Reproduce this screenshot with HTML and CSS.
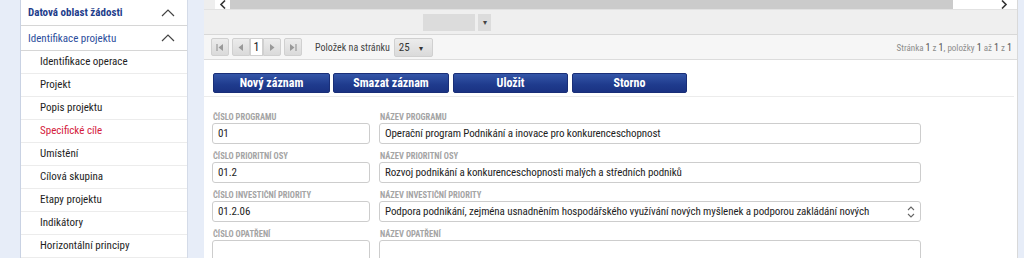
FILE: index.html
```html
<!DOCTYPE html>
<html lang="cs">
<head>
    <meta charset="UTF-8">
    <title>Identifikace projektu</title>
    <link rel="stylesheet" href="styles.css">
</head>
<body>
<div class="page">

    <aside class="sidebar">
        <div class="side-head">
            <span>Datová oblast žádosti</span>
            <svg class="chev" width="14" height="8" viewBox="0 0 14 8"><path d="M1 7 L7 1 L13 7" fill="none" stroke="#444" stroke-width="1.2"/></svg>
        </div>
        <div class="side-group">
            <span>Identifikace projektu</span>
            <svg class="chev" width="14" height="8" viewBox="0 0 14 8"><path d="M1 7 L7 1 L13 7" fill="none" stroke="#444" stroke-width="1.2"/></svg>
        </div>
        <ul class="side-list">
            <li>Identifikace operace</li>
            <li>Projekt</li>
            <li>Popis projektu</li>
            <li class="active">Specifické cíle</li>
            <li>Umístění</li>
            <li>Cílová skupina</li>
            <li>Etapy projektu</li>
            <li>Indikátory</li>
            <li>Horizontální principy</li>
        </ul>
    </aside>

    <main class="panel">
        <div class="hscroll">
            <div class="hs-btn left"><svg width="8" height="9" viewBox="0 0 8 9"><path d="M6 0.5 L2 4.5 L6 8.5" fill="none" stroke="#333" stroke-width="1.6"/></svg></div>
            <div class="hs-track"></div>
            <div class="hs-btn right"><svg width="8" height="9" viewBox="0 0 8 9"><path d="M2 0.5 L6 4.5 L2 8.5" fill="none" stroke="#333" stroke-width="1.6"/></svg></div>
        </div>

        <div class="filter-row">
            <div class="filter-box"></div>
            <div class="filter-arrow">&#9662;</div>
        </div>

        <div class="pager">
            <div class="pg-btns">
                <span class="pg-btn"><svg width="8" height="7" viewBox="0 0 8 7"><path d="M1 0 V7" stroke="#999" stroke-width="1.2"/><path d="M7 0 L2.5 3.5 L7 7 Z" fill="#999"/></svg></span>
                <span class="pg-btn"><svg width="6" height="7" viewBox="0 0 6 7"><path d="M5 0 L0.5 3.5 L5 7 Z" fill="#999"/></svg></span>
                <span class="pg-num">1</span>
                <span class="pg-btn"><svg width="6" height="7" viewBox="0 0 6 7"><path d="M1 0 L5.5 3.5 L1 7 Z" fill="#999"/></svg></span>
                <span class="pg-btn"><svg width="8" height="7" viewBox="0 0 8 7"><path d="M1 0 L5.5 3.5 L1 7 Z" fill="#999"/><path d="M7 0 V7" stroke="#999" stroke-width="1.2"/></svg></span>
            </div>
            <span class="pg-label">Položek na stránku</span>
            <span class="pg-size">25 <i>&#9662;</i></span>
            <span class="pg-info">Stránka <b>1</b> z <b>1</b>, položky <b>1</b> až <b>1</b> z <b>1</b></span>
        </div>

        <div class="actions">
            <button class="btn">Nový záznam</button>
            <button class="btn">Smazat záznam</button>
            <button class="btn">Uložit</button>
            <button class="btn">Storno</button>
        </div>

        <div class="form">
            <div class="field short">
                <label>Číslo programu</label>
                <div class="input">01</div>
            </div>
            <div class="field long">
                <label>Název programu</label>
                <div class="input">Operační program Podnikání a inovace pro konkurenceschopnost</div>
            </div>

            <div class="field short">
                <label>Číslo prioritní osy</label>
                <div class="input">01.2</div>
            </div>
            <div class="field long">
                <label>Název prioritní osy</label>
                <div class="input">Rozvoj podnikání a konkurenceschopnosti malých a středních podniků</div>
            </div>

            <div class="field short">
                <label>Číslo investiční priority</label>
                <div class="input">01.2.06</div>
            </div>
            <div class="field long">
                <label>Název investiční priority</label>
                <div class="input spin">Podpora podnikání, zejména usnadněním hospodářského využívání nových myšlenek a podporou zakládání nových
                    <svg class="spinner" width="8" height="14" viewBox="0 0 8 14"><path d="M1 5 L4 2 L7 5 M1 9 L4 12 L7 9" fill="none" stroke="#666" stroke-width="1.1"/></svg>
                </div>
            </div>

            <div class="field short">
                <label>Číslo opatření</label>
                <div class="input"></div>
            </div>
            <div class="field long">
                <label>Název opatření</label>
                <div class="input"></div>
            </div>
        </div>
    </main>

</div>
</body>
</html>
```

FILE: styles.css
```css
:root {
    --bg-blue: #e7edf8;
    --nav-blue: #1f3e8c;
    --red: #d4203c;
    --font: "Roboto", sans-serif;
}

body {
    margin: 0;
    width: 1024px;
    height: 258px;
    overflow: hidden;
    background: var(--bg-blue);
    font-family: var(--font);
    font-stretch: 75%;
    color: #222;
}

.page {
    display: flex;
    align-items: flex-start;
    padding-left: 20px;
    gap: 16px;
}

/* --- Sidebar --- */
.sidebar {
    width: 166px;
    background: #fff;
    border-left: 1px solid #c9d2e3;
    border-right: 1px solid #d4dbe8;
    font-size: 11px;
}

.side-head,
.side-group {
    display: flex;
    justify-content: space-between;
    align-items: center;
    height: 24px;
    padding: 0 12px 0 7px;
    border-bottom: 1px solid #d6d6d6;
    color: var(--nav-blue);
}

.side-head {
    height: 25px;
    font-weight: bold;
}

.side-group {
    color: #2b4d9c;
}

.chev {
    display: block;
}

.side-list {
    list-style: none;
    margin: 0;
    padding: 0;
}

.side-list li {
    height: 22px;
    line-height: 22px;
    padding-left: 19px;
    border-bottom: 1px solid #ececec;
    color: #1e1e1e;
}

.side-list li.active {
    color: var(--red);
}

/* --- Main panel --- */
.panel {
    width: 813px;
    height: 258px;
    background: #fff;
    border-right: 1px solid #d9d9d9;
}

.hscroll {
    display: flex;
    height: 9px;
    background: #eee;
    padding-left: 11px;
    border-bottom: 1px solid #e2e2e2;
}

.hs-btn {
    display: flex;
    align-items: center;
    background: #fff;
}

.hs-btn svg {
    display: block;
}

.hs-btn.left {
    width: 15px;
    justify-content: center;
}

.hs-btn.right {
    width: 64px;
    justify-content: flex-end;
    padding-right: 9px;
    box-sizing: border-box;
}

.hs-track {
    flex: 1;
    background: #cbcbcb;
}

.filter-row {
    display: flex;
    align-items: center;
    gap: 3px;
    height: 24px;
    padding-left: 219px;
    background: #efefef;
    border-bottom: 1px solid #d8d8d8;
}

.filter-box {
    width: 52px;
    height: 17px;
    background: #dcdcdc;
}

.filter-arrow {
    width: 13px;
    height: 17px;
    background: #dcdcdc;
    font-size: 8px;
    line-height: 17px;
    text-align: center;
    color: #444;
}

.pager {
    display: flex;
    align-items: center;
    height: 24px;
    padding: 0 5px 0 7px;
    background: #f6f6f6;
    border-bottom: 1px solid #dcdcdc;
    font-size: 10px;
    color: #444;
}

.pg-btns {
    display: flex;
    align-items: center;
    gap: 3px;
}

.pg-btn {
    display: flex;
    align-items: center;
    justify-content: center;
    width: 16px;
    height: 16px;
    border: 1px solid #d0d0d0;
    border-radius: 2px;
    background: linear-gradient(#ececec, #dadada);
}

.pg-btn:nth-child(2) {
    margin-right: -3px;
    border-radius: 2px 0 0 2px;
}

.pg-btn:nth-child(4) {
    margin-left: -3px;
    border-radius: 0 2px 2px 0;
}

.pg-num {
    width: 11px;
    height: 16px;
    background: #fff;
    border: 1px solid #d0d0d0;
    font-size: 12px;
    line-height: 16px;
    text-align: center;
    color: #222;
}

.pg-label {
    margin-left: 13px;
}

.pg-size {
    margin-left: 4px;
    width: 33px;
    height: 17px;
    line-height: 17px;
    padding-left: 4px;
    border: 1px solid #d0d0d0;
    border-radius: 2px;
    background: linear-gradient(#ececec, #dadada);
    font-size: 11px;
    color: #333;
}

.pg-size i {
    font-style: normal;
    font-size: 8px;
    margin-left: 7px;
}

.pg-info {
    margin-left: auto;
    color: #8c8c8c;
    font-size: 9px;
}

.pg-info b {
    font-weight: normal;
    font-size: 10px;
    color: #555;
}

.actions {
    display: flex;
    gap: 3px;
    padding: 13px 0 3px 9px;
    border-bottom: 1px solid #ececec;
    margin-right: 3px;
}

.btn {
    width: 117px;
    height: 20px;
    padding: 0;
    border: 1px solid #1a2f78;
    border-radius: 2px;
    background: linear-gradient(#3456a8, #1f3b8d 60%, #1a3282);
    color: #fff;
    font-family: var(--font);
    font-stretch: 75%;
    font-size: 12px;
    font-weight: bold;
}

.btn:nth-child(2) { width: 116px; }
.btn:nth-child(3) { width: 115px; margin-left: 1px; }
.btn:nth-child(4) { width: 115px; margin-left: 1px; }

.form {
    display: grid;
    grid-template-columns: 158px 542px;
    column-gap: 9px;
    row-gap: 7px;
    padding: 15px 0 0 8px;
}

.field label {
    display: block;
    height: 10px;
    margin: 0 0 1px 1px;
    font-size: 8.5px;
    line-height: 10px;
    font-weight: bold;
    text-transform: uppercase;
    color: #a4a4a4;
}

.input {
    position: relative;
    height: 19px;
    line-height: 19px;
    padding-left: 5px;
    border: 1px solid #cdcdcd;
    border-radius: 3px;
    font-size: 11px;
    letter-spacing: -0.1px;
    color: #1e1e1e;
    white-space: nowrap;
    overflow: hidden;
}

.spinner {
    position: absolute;
    right: 5px;
    top: 3px;
}
```
